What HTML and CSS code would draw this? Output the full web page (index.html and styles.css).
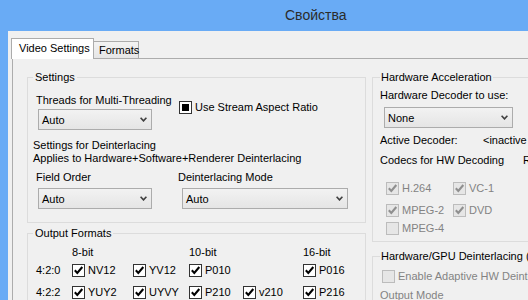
FILE: index.html
```html
<!DOCTYPE html>
<html lang="ru">
<head>
    <meta charset="UTF-8">
    <meta name="viewport" content="width=device-width, initial-scale=1.0">
    <title>Свойства</title>
    <link rel="stylesheet" href="styles.css">
</head>
<body>
    <svg class="defs" width="0" height="0">
        <symbol id="chk" viewBox="0 0 11 11"><path d="M1.8 5.3 L4.3 7.9 L9.3 2" fill="none" stroke="currentColor" stroke-width="2.1"/></symbol>
        <symbol id="chev" viewBox="0 0 7 5"><path d="M0.6 0.8 L3.5 3.9 L6.4 0.8" fill="none" stroke="currentColor" stroke-width="1.6"/></symbol>
    </svg>
    <div class="titlebar">Свойства</div>
    <div class="client">
        <div class="tabs">
            <div class="tab active">Video Settings</div>
            <div class="tab formats-tab">Formats</div>
        </div>
        <div class="page">
            <div class="col-left">
                <fieldset class="group settings">
                    <legend>Settings</legend>
                    <div class="top-row">
                        <div class="threads">
                            <div class="label">Threads for Multi-Threading</div>
                            <div class="combo">Auto<svg><use href="#chev"/></svg></div>
                        </div>
                        <div class="check aspect"><span class="box mixed"></span>Use Stream Aspect Ratio</div>
                    </div>
                    <div class="note">Settings for Deinterlacing<br>Applies to Hardware+Software+Renderer Deinterlacing</div>
                    <div class="deint">
                        <div class="field">
                            <div class="label">Field Order</div>
                            <div class="combo">Auto<svg><use href="#chev"/></svg></div>
                        </div>
                        <div class="mode">
                            <div class="label">Deinterlacing Mode</div>
                            <div class="combo">Auto<svg><use href="#chev"/></svg></div>
                        </div>
                    </div>
                </fieldset>
                <fieldset class="group formats">
                    <legend>Output Formats</legend>
                    <div class="fmt-grid">
                        <span></span><span>8-bit</span><span></span><span>10-bit</span><span></span><span>16-bit</span>

                        <span>4:2:0</span>
                        <div class="check"><span class="box"><svg><use href="#chk"/></svg></span>NV12</div>
                        <div class="check"><span class="box"><svg><use href="#chk"/></svg></span>YV12</div>
                        <div class="check"><span class="box"><svg><use href="#chk"/></svg></span>P010</div>
                        <span></span>
                        <div class="check"><span class="box"><svg><use href="#chk"/></svg></span>P016</div>

                        <span>4:2:2</span>
                        <div class="check"><span class="box"><svg><use href="#chk"/></svg></span>YUY2</div>
                        <div class="check"><span class="box"><svg><use href="#chk"/></svg></span>UYVY</div>
                        <div class="check"><span class="box"><svg><use href="#chk"/></svg></span>P210</div>
                        <div class="check"><span class="box"><svg><use href="#chk"/></svg></span>v210</div>
                        <div class="check"><span class="box"><svg><use href="#chk"/></svg></span>P216</div>
                    </div>
                </fieldset>
            </div>
            <div class="col-right">
                <fieldset class="group hw">
                    <legend>Hardware Acceleration</legend>
                    <div class="label">Hardware Decoder to use:</div>
                    <div class="combo">None<svg><use href="#chev"/></svg></div>
                    <div class="kv active-row"><span>Active Decoder:</span><span>&lt;inactive</span></div>
                    <div class="kv codecs-row"><span>Codecs for HW Decoding</span><span>R</span></div>
                    <div class="hw-grid">
                        <div class="check off"><span class="box"><svg><use href="#chk"/></svg></span>H.264</div>
                        <div class="check off"><span class="box"><svg><use href="#chk"/></svg></span>VC-1</div>
                        <div class="check off"><span class="box"><svg><use href="#chk"/></svg></span>MPEG-2</div>
                        <div class="check off"><span class="box"><svg><use href="#chk"/></svg></span>DVD</div>
                        <div class="check off"><span class="box"></span>MPEG-4</div>
                    </div>
                </fieldset>
                <fieldset class="group hw gpu">
                    <legend>Hardware/GPU Deinterlacing (GPU)</legend>
                    <div class="check off"><span class="box"></span>Enable Adaptive HW Deinterlacing</div>
                    <div class="out-mode">Output Mode</div>
                </fieldset>
            </div>
        </div>
    </div>
</body>
</html>
```

FILE: styles.css
```css
*{
    box-sizing: border-box;
}
html, body{
    margin: 0;
    height: 100%;
}
body{
    background-color: #69abf5;
    font-family: "Liberation Sans", Arial, sans-serif;
    font-size: 11px;
    line-height: 13px;
    color: #000;
    overflow: hidden;
}
.defs{
    display: block;
}
.titlebar{
    height: 31px;
    padding-left: 285px;
    font-size: 14px;
    line-height: 31px;
    color: #2b2b2b;
}
.client{
    margin-left: 8px;
    height: calc(100% - 31px);
    background-color: #f0f0f0;
    padding: 7px 0 0 3px;
    overflow: hidden;
}

/* tabs */
.tabs{
    display: flex;
    align-items: flex-end;
}
.tab{
    border: 1px solid #acacac;
    border-bottom: 0;
    white-space: nowrap;
}
.tab.active{
    width: 83px;
    height: 21px;
    padding: 3px 0 0 7px;
    margin-bottom: -1px;
    background-color: #fff;
    position: relative;
    z-index: 1;
}
.formats-tab{
    width: 45px;
    height: 17px;
    border-left: 0;
    padding: 2px 0 0 5px;
    background: linear-gradient(#f3f3f3, #e6e6e6);
}
.page{
    margin-left: 1px;
    width: 640px;
    height: 300px;
    border: 1px solid #acacac;
    background-color: #f0f0f0;
    padding: 12px 0 0 14px;
    display: flex;
    align-items: flex-start;
}
.col-left{
    width: 339px;
    flex: none;
}
.col-right{
    width: 220px;
    margin-left: 6px;
    flex: none;
}

/* group boxes */
.group{
    margin: 0;
    min-width: 0;
    padding: 0;
    border: 1px solid #dcdcdc;
}
.group legend{
    padding: 0 2px;
    line-height: 13px;
    white-space: nowrap;
}
.settings{
    padding: 10px 0 13px 5px;
}
.formats{
    margin-top: 4px;
    padding: 6px 0 0 5px;
    height: 120px;
}
.hw{
    padding: 5px 0 6px 7px;
}
.hw legend{
    padding: 0 1px;
}
.gpu{
    margin-top: 8px;
    padding: 7px 0 0 7px;
    height: 80px;
}

/* combo boxes */
.combo{
    display: flex;
    align-items: flex-start;
    height: 21px;
    border: 1px solid #acacac;
    background: linear-gradient(#f2f2f2, #e5e5e5);
    padding: 4px 4px 0 3px;
}
.combo svg{
    width: 7px;
    height: 5px;
    margin-left: auto;
    margin-top: 3px;
    color: #404040;
}

/* check boxes */
.check{
    display: flex;
    align-items: center;
    gap: 3px;
    white-space: nowrap;
}
.box{
    width: 13px;
    height: 13px;
    flex: none;
    border: 1px solid #333;
    background-color: #fff;
    display: flex;
    align-items: center;
    justify-content: center;
}
.box svg{
    width: 11px;
    height: 11px;
}
.box.mixed::after{
    content: "";
    width: 7px;
    height: 7px;
    background-color: #000;
}
.off{
    color: #838383;
}
.off .box{
    border-color: #bcbcbc;
    background-color: #e6e6e6;
    color: #8f8f8f;
}

/* settings group */
.top-row{
    display: flex;
    align-items: flex-start;
}
.threads{
    width: 146px;
}
.threads .label{
    margin-left: 3px;
}
.threads .combo{
    width: 114px;
    margin: 2px 0 0 5px;
}
.aspect{
    margin-top: 7px;
}
.note{
    margin-top: 9px;
}
.deint{
    display: grid;
    grid-template-columns: 145px 175px;
    margin-top: 6px;
}
.field .label{
    margin-left: 3px;
}
.field .combo{
    width: 114px;
    margin: 4px 0 0 5px;
}
.mode .combo{
    width: 166px;
    margin: 4px 0 0 4px;
}

/* output formats */
.fmt-grid{
    display: grid;
    grid-template-columns: 36px 61px 56px 54px 60px 50px;
    grid-template-rows: 18px 22px 22px;
    align-items: start;
    margin-left: 3px;
}

/* hardware acceleration */
.hw .combo{
    width: 129px;
    margin: 5px 0 0 4px;
}
.kv{
    display: flex;
    white-space: nowrap;
}
.active-row{
    margin-top: 6px;
}
.active-row span:first-child{
    width: 103px;
    flex: none;
}
.codecs-row{
    margin-top: 7px;
}
.codecs-row span:first-child{
    width: 143px;
    flex: none;
}
.hw-grid{
    display: grid;
    grid-template-columns: 67px 67px;
    grid-template-rows: 22px 23px 13px;
    margin: 10px 0 0 6px;
}
.gpu .check{
    margin-left: 2px;
}
.out-mode{
    margin-top: 6px;
    color: #838383;
}
```
